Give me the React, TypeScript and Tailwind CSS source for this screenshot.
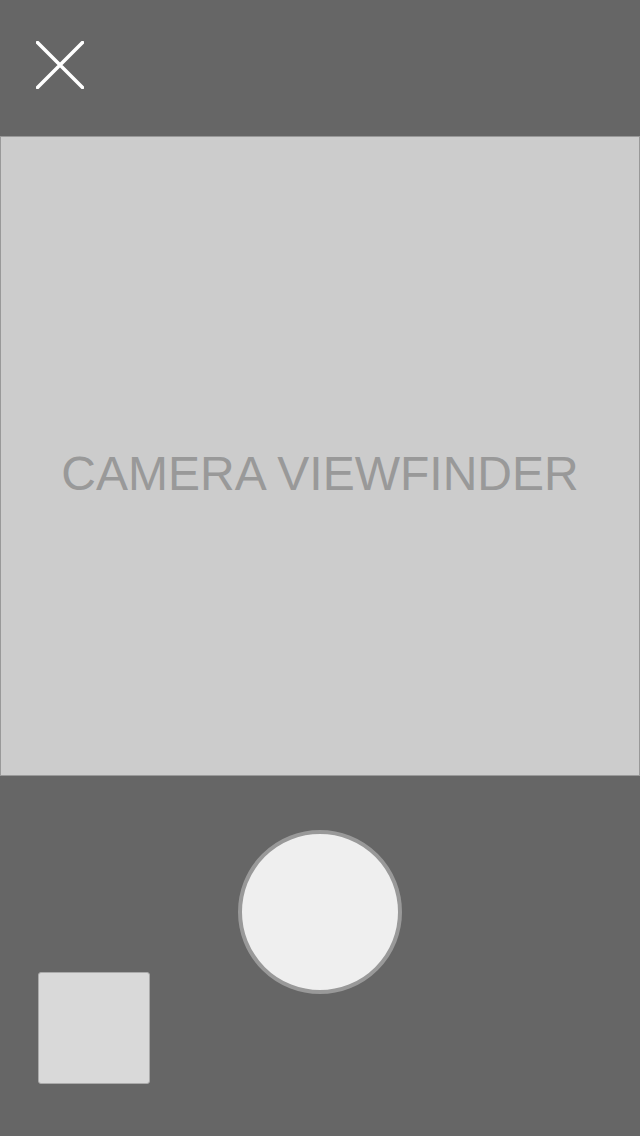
export default function App() {
  return (
    <div
      className="w-[640px] h-[1136px] bg-[#666666] flex flex-col overflow-hidden"
      style={{ fontFamily: '"Liberation Sans", Arial, sans-serif' }}
    >
      {/* top bar */}
      <div className="h-[136px] shrink-0 pl-[36px] pt-[41px]">
        <button className="block w-[48px] h-[48px]" aria-label="Close">
          <svg width="48" height="48" viewBox="0 0 48 48">
            <path d="M1.5 1.5L46.5 46.5M46.5 1.5L1.5 46.5" stroke="#ffffff" strokeWidth="3.5" strokeLinecap="round" />
          </svg>
        </button>
      </div>

      {/* viewfinder */}
      <div className="h-[640px] shrink-0 bg-[#cccccc] border border-[#999999] flex items-center justify-center pt-[36px]">
        <span className="text-[48px] leading-none text-[#999999]">CAMERA VIEWFINDER</span>
      </div>

      {/* controls */}
      <div className="flex-1 grid grid-cols-[1fr_auto_1fr]">
        <div className="flex items-end pl-[38px] pb-[52px]">
          <div className="w-[112px] h-[112px] rounded-[3px] bg-[#d9d9d9] border border-[#aaaaaa]" />
        </div>
        <div className="pt-[54px]">
          <button
            className="block w-[164px] h-[164px] rounded-full bg-[#efefef] border-[4px] border-[#999999]"
            aria-label="Capture"
          />
        </div>
        <div />
      </div>
    </div>
  );
}
